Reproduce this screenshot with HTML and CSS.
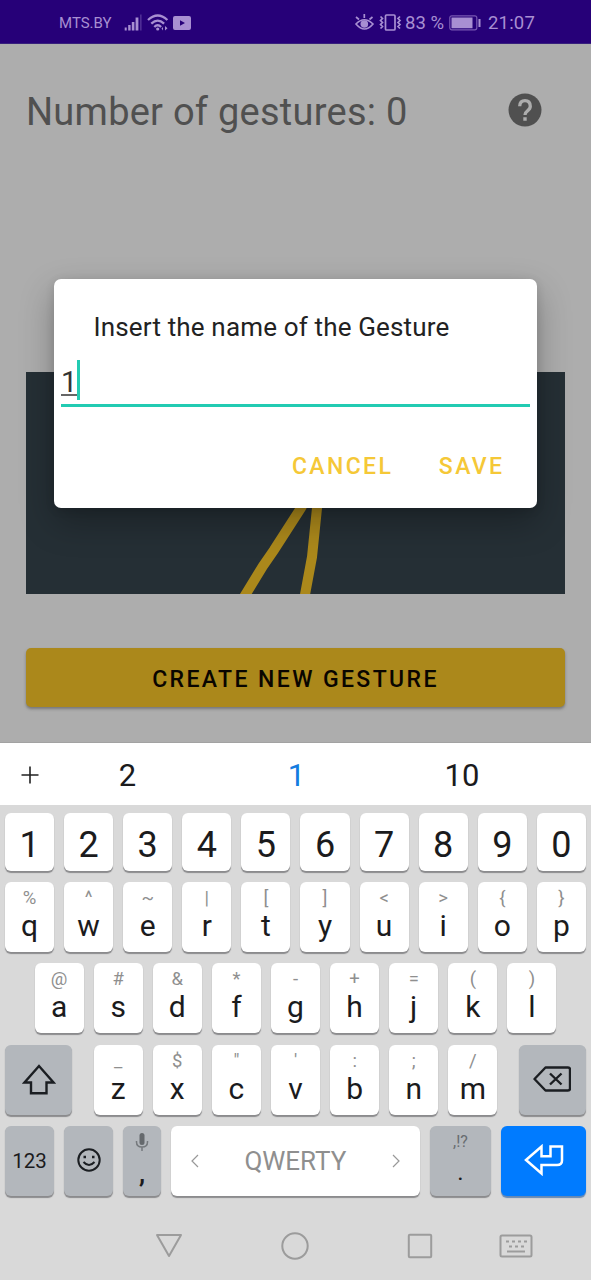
FILE: index.html
```html
<!DOCTYPE html>
<html lang="en">
<head>
<meta charset="utf-8">
<title>Gestures</title>
<link rel="stylesheet" href="styles.css">
</head>
<body>
<header class="status">
  <span class="carrier">MTS.BY</span>
  <svg class="status-left" width="70" height="20" viewBox="0 0 70 20" fill="#a88fd2">
    <path d="M.7 15.500h2v3H.7zM4.200 13h2.400v5.500H4.200zM7.800 10h2.600v8.500H7.800zM11.600 5.500h2.800v13h-2.800z"/><path d="M16.200 2.500h1.300v16h-1.300z" opacity=".4"/>
    <g fill="none" stroke="#a88fd2" stroke-width="2.300"><path d="M24 8q9.700-9 19.400 0M27.300 11.600q6.400-6 12.800 0M30.300 15q3.400-3.400 6.800 0"/></g>
    <circle cx="33.700" cy="17" r="1.600"/><path d="M41 14v4.500l2.500-2.200zM39 15v3.500l-1.500-2z"/>
    <path fill-rule="evenodd" d="M51 4h14q2 0 2 2v10q0 2-2 2H51q-2 0-2-2V6q0-2 2-2zM56 8.300v5.400l5-2.700z"/>
  </svg>
  <svg class="status-right" width="48" height="20" viewBox="0 0 48 20" fill="none" stroke="#a88fd2" stroke-width="1.700">
    <path d="M2 12q8-8.500 17 0q-8.500 10-17 0zM10.300 6V2M5 7.500L2 5M15.500 7.500L18.500 5"/><circle cx="10.300" cy="12" r="3" fill="#a88fd2"/>
    <rect x="31.500" y="3" width="9.500" height="15" rx="1"/><path d="M26.500 4.500l2 2-2 2 2 2-2 2 2 2-2 2M46 4.500l-2 2 2 2-2 2 2 2-2 2 2 2"/>
  </svg>
  <span class="percent">83 %</span>
  <svg class="battery" width="34" height="16" viewBox="0 0 34 16"><rect x=".8" y=".8" width="27" height="14" rx="2" fill="none" stroke="#7857b2" stroke-width="1.200"/><path d="M2.500 2.500h21v10.800h-21zM29.500 4h2v8h-2z" fill="#a88fd2"/></svg>
  <span class="clock">21:07</span>
</header>

<main class="app">
  <div class="heading"><h1>Number of gestures: 0</h1>
    <svg class="help" width="34" height="34" viewBox="0 0 34 34"><circle cx="17" cy="17" r="16.500" fill="#505050"/><path d="M11.700 13.300q.2-5.600 5.300-5.600t5.300 5.600q0 2.500-2.800 4.500-2.500 1.800-2.500 4.200" fill="none" stroke="#adadad" stroke-width="3.300"/><path d="M15.300 24.300h3.400v3.400h-3.400z" fill="#adadad"/></svg>
  </div>
  <svg class="gesture-preview" width="539" height="222" viewBox="0 0 539 222"><path d="M294 100L275 136 248 178 237 194 218 225M293.500 100L291 136 286 185 278 228" fill="none" stroke="#ab881b" stroke-width="10"/></svg>
  <button class="create">CREATE NEW GESTURE</button>
</main>

<section class="dialog" role="dialog">
  <h2>Insert the name of the Gesture</h2>
  <div class="field"><span class="value">1</span><i class="caret"></i></div>
  <div class="actions"><button class="cancel">CANCEL</button><button class="save">SAVE</button></div>
</section>

<section class="keyboard">
  <div class="suggestions"><svg class="plus" width="18" height="18" viewBox="0 0 18 18"><path d="M9 .5v17M.5 9h17" stroke="#222" stroke-width="1.600"/></svg><span>2</span><span class="best">1</span><span>10</span></div>
  <div class="row digits"><b>1</b><b>2</b><b>3</b><b>4</b><b>5</b><b>6</b><b>7</b><b>8</b><b>9</b><b>0</b></div>
  <div class="row"><b><i>%</i>q</b><b><i>^</i>w</b><b><i>~</i>e</b><b><i>|</i>r</b><b><i>[</i>t</b><b><i>]</i>y</b><b><i>&lt;</i>u</b><b><i>&gt;</i>i</b><b><i>{</i>o</b><b><i>}</i>p</b></div>
  <div class="row home"><b><i>@</i>a</b><b><i>#</i>s</b><b><i>&amp;</i>d</b><b><i>*</i>f</b><b><i>-</i>g</b><b><i>+</i>h</b><b><i>=</i>j</b><b><i>(</i>k</b><b><i>)</i>l</b></div>
  <div class="row lower">
    <b class="fn shift"><svg width="34" height="32" viewBox="0 0 34 32"><path d="M17 2L2.500 18.500H9v10.700h15.500V18.500H31.500z" fill="none" stroke="#1b1e22" stroke-width="2.400"/></svg></b>
    <b><i>_</i>z</b><b><i>$</i>x</b><b><i>"</i>c</b><b><i>'</i>v</b><b><i>:</i>b</b><b><i>;</i>n</b><b><i>/</i>m</b>
    <b class="fn delete"><svg width="38" height="26" viewBox="0 0 38 26" fill="none" stroke="#1b1e22" stroke-width="2.400" stroke-linejoin="round"><path d="M1.500 13L12.500 1.500H35q2 0 2 2v19q0 2-2 2H12.500zM17 7.500l11.500 11M28.500 7.500l-11.500 11"/></svg></b>
  </div>
  <div class="row bottom">
    <b class="fn numeric">123</b>
    <b class="fn emoji"><svg width="24" height="24" viewBox="0 0 24 24" fill="none" stroke="#1b1e22" stroke-width="2"><circle cx="12" cy="12" r="10.700"/><path d="M6.500 14q5.500 6 11 0"/><path d="M6.500 9h2.500M15 9h2.500" stroke-width="2.500"/></svg></b>
    <b class="fn comma"><svg width="14" height="20" viewBox="0 0 14 20"><rect x="4.500" y="1" width="5" height="12" rx="2.500" fill="#65696d"/><path d="M1.500 9v1q0 5 5.500 5t5.500-5V9M7 15v4" fill="none" stroke="#75797d" stroke-width="1.500"/></svg><span>,</span></b>
    <b class="space"><svg width="8" height="14" viewBox="0 0 8 14"><path d="M7 1L1 7l6 6" fill="none" stroke="#999" stroke-width="1.200"/></svg><span>QWERTY</span><svg width="8" height="14" viewBox="0 0 8 14"><path d="M1 1l6 6-6 6" fill="none" stroke="#999" stroke-width="1.200"/></svg></b>
    <b class="fn period"><i>,!?</i><span>.</span></b>
    <b class="enter"><svg width="40" height="32" viewBox="0 0 40 32"><path d="M2 16L17.500 2.500v9.700h9V2.500H38V16.500q0 4.500-5 4.500H17.500V29.500z" fill="none" stroke="#fff" stroke-width="2.500"/></svg></b>
  </div>
  <nav class="system-nav">
    <svg width="28" height="26" viewBox="0 0 28 26"><path d="M2 2h24L14 23z" fill="none" stroke="#9c9c9c" stroke-width="2" stroke-linejoin="round"/></svg>
    <svg width="28" height="28" viewBox="0 0 28 28"><circle cx="14" cy="14" r="12.700" fill="none" stroke="#9c9c9c" stroke-width="2"/></svg>
    <svg width="26" height="26" viewBox="0 0 26 26"><rect x="1.800" y="1.800" width="22.400" height="22.400" rx="1" fill="none" stroke="#9c9c9c" stroke-width="2"/></svg>
    <svg width="34" height="24" viewBox="0 0 34 24" fill="none" stroke="#9c9c9c" stroke-width="2"><rect x="1.500" y="1.500" width="31" height="21" rx="1.500"/><path d="M7 7.500h21" stroke-dasharray="3 3"/><path d="M10 12.500h15" stroke-dasharray="3 3"/><path d="M8 17.500h18"/></svg>
  </nav>
</section>
</body>
</html>
```
FILE: styles.css
```css
* { box-sizing: border-box; }
body { margin: 0; width: 591px; height: 1280px; overflow: hidden; position: relative; display: flex; flex-direction: column; font-family: Roboto, sans-serif; background: #d9d9d9; color: #1b1b1d; }
svg { display: block; flex: none; }
button { border: 0; padding: 0; background: none; font-family: inherit; font-weight: 500; white-space: nowrap; }
h1, h2 { margin: 0; font-weight: 400; white-space: nowrap; }

.status { height: 44px; flex: none; display: flex; align-items: flex-start; background: #260078; color: #a88fd2; border-bottom: 1px solid #37207c; white-space: nowrap; }
.carrier { width: 53px; margin: 13px 0 0 59px; font-size: 15px; line-height: 20px; }
.status-left { margin: 12px 0 0 12px; }
.status-right { margin: 12px 0 0 160px; }
.percent { width: 42px; margin: 13px 0 0 3px; font-size: 18.500px; line-height: 20px; }
.battery { margin: 15px 0 0 2px; }
.clock { margin: 13px 0 0 5px; font-size: 18.500px; line-height: 20px; letter-spacing: .2px; }

.app { height: 699px; flex: none; background: #adadad; display: flex; flex-direction: column; align-items: center; border-bottom: 1px solid #a2a2a2; }
.heading { width: 539px; height: 328px; display: flex; justify-content: space-between; align-items: flex-start; padding: 44px 23px 0 0; }
.heading h1 { font-size: 38px; line-height: 48px; letter-spacing: .25px; color: #505050; }
.help { margin-top: 5px; }
.gesture-preview { background: #252f35; }
.create { width: 539px; height: 59px; margin-top: 54px; padding-top: 3px; border-radius: 5px; background: #ab881b; color: #090500; font-size: 23px; letter-spacing: 2.400px; box-shadow: 0 2px 3px #777; }

.dialog { position: absolute; left: 54px; top: 279px; width: 483px; height: 229px; padding: 33px 7px 0; border-radius: 7px; background: #fff; box-shadow: 0 14px 34px rgba(0,0,0,.28), 0 2px 10px rgba(0,0,0,.12); display: flex; flex-direction: column; }
.dialog h2 { padding-left: 32.500px; font-size: 26px; line-height: 31px; letter-spacing: .16px; color: #222; }
.field { margin-top: 17px; height: 47px; border-bottom: 3px solid #22cbb2; display: flex; }
.value { width: 16px; height: 36px; font-size: 29px; line-height: 45px; border-bottom: 2px solid #666; color: #333; }
.caret { width: 3px; height: 40px; background: #22cbb2; }
.actions { display: flex; justify-content: flex-end; gap: 45.500px; margin-top: 43px; padding-right: 25.500px; }
.actions button { font-size: 23px; line-height: 33px; letter-spacing: 2.400px; color: #f5c837; }

.keyboard { flex: 1; display: flex; flex-direction: column; }
.suggestions { height: 62px; flex: none; background: #fff; display: grid; grid-template-columns: 43px 169px 169px 162px; align-items: center; font-size: 31px; line-height: 38px; text-align: center; padding-top: 3px; }
.plus { margin: -1px 0 0 21px; }
.best { color: #147ce0; }
.row { display: flex; gap: 10px; padding: 0 5px; height: 70px; margin-top: 11.200px; }
.row b { flex: 1 1 0; min-width: 0; height: 70px; padding-top: 6px; display: flex; flex-direction: column; align-items: center; border-radius: 6px; background: #fff; box-shadow: 0 1.300px 1px #8b8b8d; font-size: 30px; line-height: 36px; font-weight: 400; }
.row i { font-style: normal; font-size: 18.500px; line-height: 20px; color: #8f8f8f; }
.row.digits { height: 58px; margin-top: 8px; }
.digits b { height: 58px; padding-top: 3px; font-size: 36px; line-height: 58px; }
.digits + .row { margin-top: 10.800px; }
.row.home { padding: 0 34.500px; }
.row.lower { margin-top: 11.600px; }
.row .fn { background: #b3b7bc; }
.row .shift, .row .delete { flex: 0 0 67px; }
.row .shift { margin-right: 11.500px; padding-top: 19px; }
.row .delete { margin-left: 11.500px; padding-top: 21px; }
.row .numeric { flex: 0 0 49px; font-size: 20.500px; line-height: 58px; }
.row .emoji { flex: 0 0 49px; padding-top: 22px; }
.row .comma { flex: 0 0 38px; }
.comma span { font-size: 25px; font-weight: 700; line-height: 44px; }
.row .space { flex: 1; flex-direction: row; justify-content: space-between; padding: 0 20px; color: #8f8f8f; font-size: 26px; }
.row .period { flex: 0 0 61px; }
.period i { font-size: 16px; color: #686c70; }
.period span { font-size: 24px; line-height: 40px; }
.row .enter { flex: 0 0 85px; background: #007bff; padding-top: 18px; box-shadow: 0 1.300px 1px #6488b4; }
.system-nav { display: grid; grid-template-columns: 127px 125px 125px 67px; justify-items: center; align-items: center; height: 52px; padding-left: 105px; margin-top: 24px; }
```
